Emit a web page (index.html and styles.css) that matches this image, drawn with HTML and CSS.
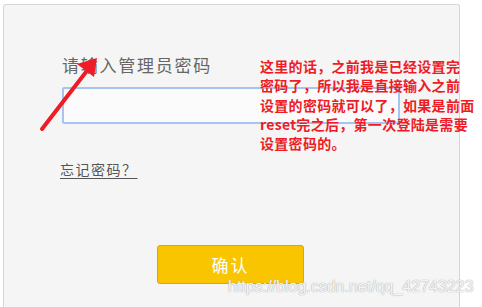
FILE: index.html
```html
<!DOCTYPE html>
<html lang="zh">
<head>
<meta charset="utf-8">
<link rel="stylesheet" href="styles.css">
</head>
<body>
<div class="panel">
  <div class="form">
    <div class="label">请输入管理员密码</div>
    <div class="input"></div>
    <a class="forgot">忘记密码？</a>
    <div class="btn-row"><button class="btn">确认</button></div>
  </div>
</div>
<svg class="arrow" width="120" height="100" viewBox="0 0 120 100">
  <line x1="42" y1="89" x2="86" y2="32" stroke="#ee1c25" stroke-width="4" stroke-linecap="round"/>
  <polygon points="97,18 94,37 77,24" fill="#ee1c25"/>
</svg>
<div class="note">这里的话，之前我是已经设置完<br>密码了，所以我是直接输入之前<br>设置的密码就可以了，如果是前面<br>reset完之后，第一次登陆是需要<br>设置密码的。</div>
<div class="watermark">https://blog.csdn.net/qq_42743223</div>
</body>
</html>
```
FILE: styles.css
```css
html, body {
  margin: 0;
  padding: 0;
  background: #ffffff;
  width: 482px;
  height: 307px;
  overflow: hidden;
  position: relative;
}
.panel {
  margin: 4px 0 0 3px;
  width: 455px;
  height: 302px;
  background: #f5f5f5;
  border: 1px solid #d6d6d6;
  border-bottom: none;
  border-radius: 3px 3px 0 0;
}
.form {
  padding: 48px 0 0 58px;
  font-family: "Noto Sans CJK SC", sans-serif;
}
.label {
  font-size: 17px;
  letter-spacing: 1.75px;
  color: #666;
  line-height: 24px;
  height: 34px;
}
.input {
  width: 334px;
  height: 33px;
  border: 2px solid #a6c4f2;
  border-radius: 2px;
  background: #fbfbfb;
}
.forgot {
  display: inline-block;
  margin-top: 35px;
  margin-left: -2px;
  font-size: 14px;
  letter-spacing: 1.5px;
  color: #555;
  line-height: 20px;
  text-decoration: underline;
  text-underline-offset: 3px;
}
.btn-row {
  padding: 65px 0 0 95px;
}
.btn {
  width: 147px;
  height: 39px;
  border: 1px solid #ea9a20;
  border-radius: 3px;
  background: #f8c500;
  color: #fff;
  font-family: "Noto Sans CJK SC", sans-serif;
  font-size: 17px;
  letter-spacing: 2px;
  padding: 0;
}
.arrow {
  position: absolute;
  left: 0;
  top: 40px;
}
.note {
  position: absolute;
  left: 260px;
  top: 57px;
  font-family: "Noto Sans CJK SC", sans-serif;
  font-weight: bold;
  font-size: 14px;
  letter-spacing: 0.3px;
  line-height: 19.3px;
  color: #ee1c25;
  white-space: nowrap;
}
.watermark {
  position: absolute;
  left: 228px;
  top: 278px;
  font-family: "Liberation Sans", Arial, sans-serif;
  font-size: 16px;
  line-height: 18px;
  color: rgba(255,255,255,0.9);
  text-shadow: 0 0 1px #a8a8a8, 0 0 1px #b8b8b8;
  white-space: nowrap;
}
```
